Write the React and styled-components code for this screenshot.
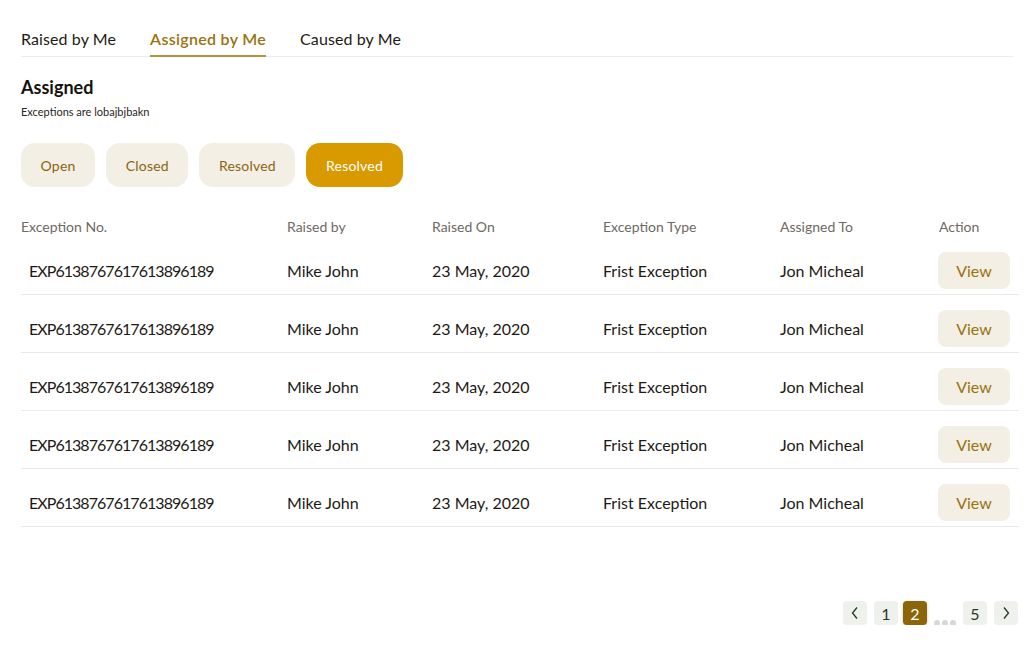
import styled, { createGlobalStyle } from "styled-components";

const GlobalStyle = createGlobalStyle`
  body {
    margin: 0;
    background: #fff;
    font-family: "Lato", "Liberation Sans", sans-serif;
    color: #1d1a16;
  }
`;

const rows = Array.from({ length: 5 }, () => ({
  id: "EXP6138767617613896189",
  raisedBy: "Mike John",
  raisedOn: "23 May, 2020",
  type: "Frist Exception",
  assignedTo: "Jon Micheal",
}));

const tabs = ["Raised by Me", "Assigned by Me", "Caused by Me"];
const filters = ["Open", "Closed", "Resolved", "Resolved"];

const App = () => {
  return (
    <Page>
      <GlobalStyle />
      <Tabs>
        {tabs.map((t, i) => (
          <Tab key={t} active={i === 1}>
            {t}
          </Tab>
        ))}
      </Tabs>

      <Title>Assigned</Title>
      <Subtitle>Exceptions are lobajbjbakn</Subtitle>

      <Filters>
        {filters.map((f, i) => (
          <Chip key={i} active={i === 3}>
            {f}
          </Chip>
        ))}
      </Filters>

      <Table>
        <HeadRow>
          <span>Exception No.</span>
          <span>Raised by</span>
          <span>Raised On</span>
          <span>Exception Type</span>
          <span>Assigned To</span>
          <span>Action</span>
        </HeadRow>
        {rows.map((r, i) => (
          <Row key={i}>
            <IdCell>{r.id}</IdCell>
            <Cell>{r.raisedBy}</Cell>
            <Cell>{r.raisedOn}</Cell>
            <Cell>{r.type}</Cell>
            <Cell>{r.assignedTo}</Cell>
            <ViewButton>View</ViewButton>
          </Row>
        ))}
      </Table>

      <Pager>
        <PageBtn>
          <svg width="10" height="14" viewBox="0 0 10 14" fill="none">
            <path d="M7 1.5L2.5 7L7 12.5" stroke="#1f3b1f" strokeWidth="1.3" />
          </svg>
        </PageBtn>
        <PageBtn>1</PageBtn>
        <PageBtn active>2</PageBtn>
        <Dots>
          <i />
          <i />
          <i />
        </Dots>
        <PageBtn>5</PageBtn>
        <PageBtn>
          <svg width="10" height="14" viewBox="0 0 10 14" fill="none">
            <path d="M3 1.5L7.5 7L3 12.5" stroke="#1f3b1f" strokeWidth="1.3" />
          </svg>
        </PageBtn>
      </Pager>
    </Page>
  );
};

export default App;

const Page = styled.div`
  padding: 29px 16px 0 21px;
  display: flex;
  flex-direction: column;
`;

const Tabs = styled.div`
  display: flex;
  gap: 34px;
  border-bottom: 1px solid #ebebea;
  margin-right: 5px;
`;

const Tab = styled.div`
  font-size: 16px;
  padding-bottom: 7px;
  color: ${(p) => (p.active ? "#9a720e" : "#1d1a16")};
  font-weight: ${(p) => (p.active ? 600 : 400)};
  letter-spacing: ${(p) => (p.active ? "0.3px" : "0.1px")};
  border-bottom: 2px solid ${(p) => (p.active ? "#b8923a" : "transparent")};
  margin-bottom: -1px;
  cursor: pointer;
`;

const Title = styled.h2`
  margin: 19px 0 0;
  font-size: 18px;
  font-weight: 700;
  color: #15120e;
`;

const Subtitle = styled.p`
  margin: 7px 0 0;
  font-size: 11px;
  color: #2a2622;
`;

const Filters = styled.div`
  display: flex;
  gap: 11px;
  margin-top: 25px;
`;

const Chip = styled.button`
  height: 44px;
  padding: 0 19.6px;
  border: none;
  border-radius: 14px;
  font-family: inherit;
  font-size: 14px;
  letter-spacing: 0.2px;
  background: ${(p) => (p.active ? "#d99a00" : "#f3efe5")};
  color: ${(p) => (p.active ? "#fff" : "#8a6510")};
  cursor: pointer;
`;

const grid = `
  display: grid;
  grid-template-columns: 266px 145px 171px 177px 159px 80px;
  align-items: center;
`;

const Table = styled.div`
  margin-top: 29px;
  display: flex;
  flex-direction: column;
`;

const HeadRow = styled.div`
  ${grid}
  font-size: 14px;
  color: #6e6a64;
  padding-bottom: 1px;
  height: 20px;
`;

const Row = styled.div`
  ${grid}
  padding: 15px 0 5px;
  border-bottom: 1px solid #e9e9e7;
  margin-right: -1px;
`;

const Cell = styled.span`
  font-size: 16px;
  color: #1d1a16;
`;

const IdCell = styled(Cell)`
  padding-left: 8px;
  letter-spacing: -0.95px;
`;

const ViewButton = styled.button`
  width: 72px;
  height: 37px;
  margin-left: -1px;
  border: none;
  border-radius: 8px;
  background: #f3efe5;
  color: #9a720e;
  font-family: inherit;
  font-size: 16px;
  cursor: pointer;
`;

const Pager = styled.div`
  display: flex;
  align-items: center;
  justify-content: flex-end;
  gap: 7px;
  margin-top: 74px;
`;

const PageBtn = styled.div`
  width: 24px;
  height: 24px;
  border-radius: 4px;
  display: flex;
  align-items: center;
  justify-content: center;
  font-size: 16px;
  margin-left: ${(p) => (p.active ? "-2px" : "0")};
  background: ${(p) => (p.active ? "#8b6508" : "#eff1ed")};
  color: ${(p) => (p.active ? "#fff" : "#1f3b1f")};
  box-shadow: ${(p) => (p.active ? "0 1px 3px rgba(0,0,0,0.25)" : "none")};
`;

const Dots = styled.div`
  display: flex;
  gap: 2px;
  align-self: flex-end;
  margin-bottom: -1px;

  i {
    width: 6px;
    height: 6px;
    border-radius: 50%;
    background: #d8d8d8;
  }
`;
